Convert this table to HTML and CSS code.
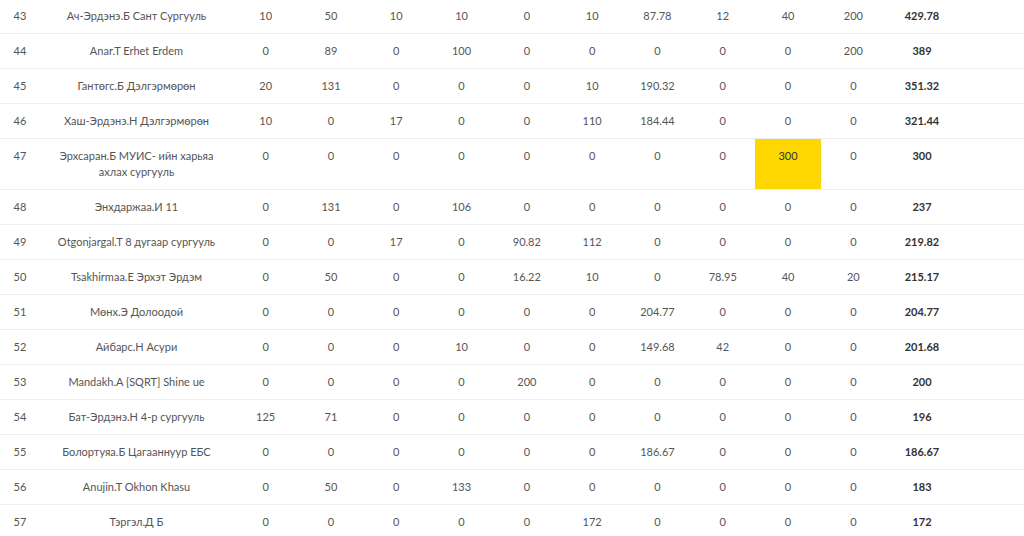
FILE: index.html
```html
<!DOCTYPE html>
<html lang="mn">
<head>
<meta charset="utf-8">
<title>Results</title>
<link rel="stylesheet" href="styles.css">
</head>
<body>
<div class="board">
<table class="results">
<colgroup>
<col class="c-rank"><col class="c-name">
<col class="c-num"><col class="c-num"><col class="c-num"><col class="c-num"><col class="c-num">
<col class="c-num"><col class="c-num"><col class="c-num"><col class="c-num"><col class="c-num">
<col class="c-total"><col class="c-rest">
</colgroup>
<tbody>
<tr><td>43</td><td>Ач-Эрдэнэ.Б Сант Сургууль</td><td>10</td><td>50</td><td>10</td><td>10</td><td>0</td><td>10</td><td>87.78</td><td>12</td><td>40</td><td>200</td><td class="total">429.78</td><td></td></tr>
<tr><td>44</td><td>Anar.T Erhet Erdem</td><td>0</td><td>89</td><td>0</td><td>100</td><td>0</td><td>0</td><td>0</td><td>0</td><td>0</td><td>200</td><td class="total">389</td><td></td></tr>
<tr><td>45</td><td>Гантөгс.Б Дэлгэрмөрөн</td><td>20</td><td>131</td><td>0</td><td>0</td><td>0</td><td>10</td><td>190.32</td><td>0</td><td>0</td><td>0</td><td class="total">351.32</td><td></td></tr>
<tr><td>46</td><td>Хаш-Эрдэнэ.Н Дэлгэрмөрөн</td><td>10</td><td>0</td><td>17</td><td>0</td><td>0</td><td>110</td><td>184.44</td><td>0</td><td>0</td><td>0</td><td class="total">321.44</td><td></td></tr>
<tr><td>47</td><td>Эрхсаран.Б МУИС- ийн харьяа ахлах сургууль</td><td>0</td><td>0</td><td>0</td><td>0</td><td>0</td><td>0</td><td>0</td><td>0</td><td class="best">300</td><td>0</td><td class="total">300</td><td></td></tr>
<tr><td>48</td><td>Энхдаржаа.И 11</td><td>0</td><td>131</td><td>0</td><td>106</td><td>0</td><td>0</td><td>0</td><td>0</td><td>0</td><td>0</td><td class="total">237</td><td></td></tr>
<tr><td>49</td><td>Otgonjargal.T 8 дугаар сургууль</td><td>0</td><td>0</td><td>17</td><td>0</td><td>90.82</td><td>112</td><td>0</td><td>0</td><td>0</td><td>0</td><td class="total">219.82</td><td></td></tr>
<tr><td>50</td><td>Tsakhirmaa.E Эрхэт Эрдэм</td><td>0</td><td>50</td><td>0</td><td>0</td><td>16.22</td><td>10</td><td>0</td><td>78.95</td><td>40</td><td>20</td><td class="total">215.17</td><td></td></tr>
<tr><td>51</td><td>Мөнх.Э Долоодой</td><td>0</td><td>0</td><td>0</td><td>0</td><td>0</td><td>0</td><td>204.77</td><td>0</td><td>0</td><td>0</td><td class="total">204.77</td><td></td></tr>
<tr><td>52</td><td>Айбарс.Н Асури</td><td>0</td><td>0</td><td>0</td><td>10</td><td>0</td><td>0</td><td>149.68</td><td>42</td><td>0</td><td>0</td><td class="total">201.68</td><td></td></tr>
<tr><td>53</td><td>Mandakh.A [SQRT] Shine ue</td><td>0</td><td>0</td><td>0</td><td>0</td><td>200</td><td>0</td><td>0</td><td>0</td><td>0</td><td>0</td><td class="total">200</td><td></td></tr>
<tr><td>54</td><td>Бат-Эрдэнэ.Н 4-р сургууль</td><td>125</td><td>71</td><td>0</td><td>0</td><td>0</td><td>0</td><td>0</td><td>0</td><td>0</td><td>0</td><td class="total">196</td><td></td></tr>
<tr><td>55</td><td>Болортуяа.Б Цагааннуур ЕБС</td><td>0</td><td>0</td><td>0</td><td>0</td><td>0</td><td>0</td><td>186.67</td><td>0</td><td>0</td><td>0</td><td class="total">186.67</td><td></td></tr>
<tr><td>56</td><td>Anujin.T Okhon Khasu</td><td>0</td><td>50</td><td>0</td><td>133</td><td>0</td><td>0</td><td>0</td><td>0</td><td>0</td><td>0</td><td class="total">183</td><td></td></tr>
<tr><td>57</td><td>Тэргэл.Д Б</td><td>0</td><td>0</td><td>0</td><td>0</td><td>0</td><td>172</td><td>0</td><td>0</td><td>0</td><td>0</td><td class="total">172</td><td></td></tr>
</tbody>
</table>
</div>
</body>
</html>
```
FILE: styles.css
```css
html, body {
  margin: 0;
  padding: 0;
  background: #ffffff;
}
body {
  font-family: Lato, "Noto Sans", "Liberation Sans", sans-serif;
  font-size: 11px;
  line-height: 16px;
  color: #555555;
  overflow: hidden;
}
.board {
  margin-top: -1px;
}
.results {
  width: 1024px;
  table-layout: fixed;
  border-collapse: collapse;
}
.c-rank { width: 40px; }
.c-name { width: 193px; }
.c-num { width: 65.3px; }
.c-total { width: 72px; }
.c-rest { width: auto; }
.results td {
  padding: 9px 8px;
  text-align: center;
  vertical-align: top;
  border-bottom: 1px solid #eeeeee;
}
.results td.total {
  font-weight: 700;
  color: #333333;
}
.results td.best {
  background: #ffd700;
  color: #333333;
}
```
